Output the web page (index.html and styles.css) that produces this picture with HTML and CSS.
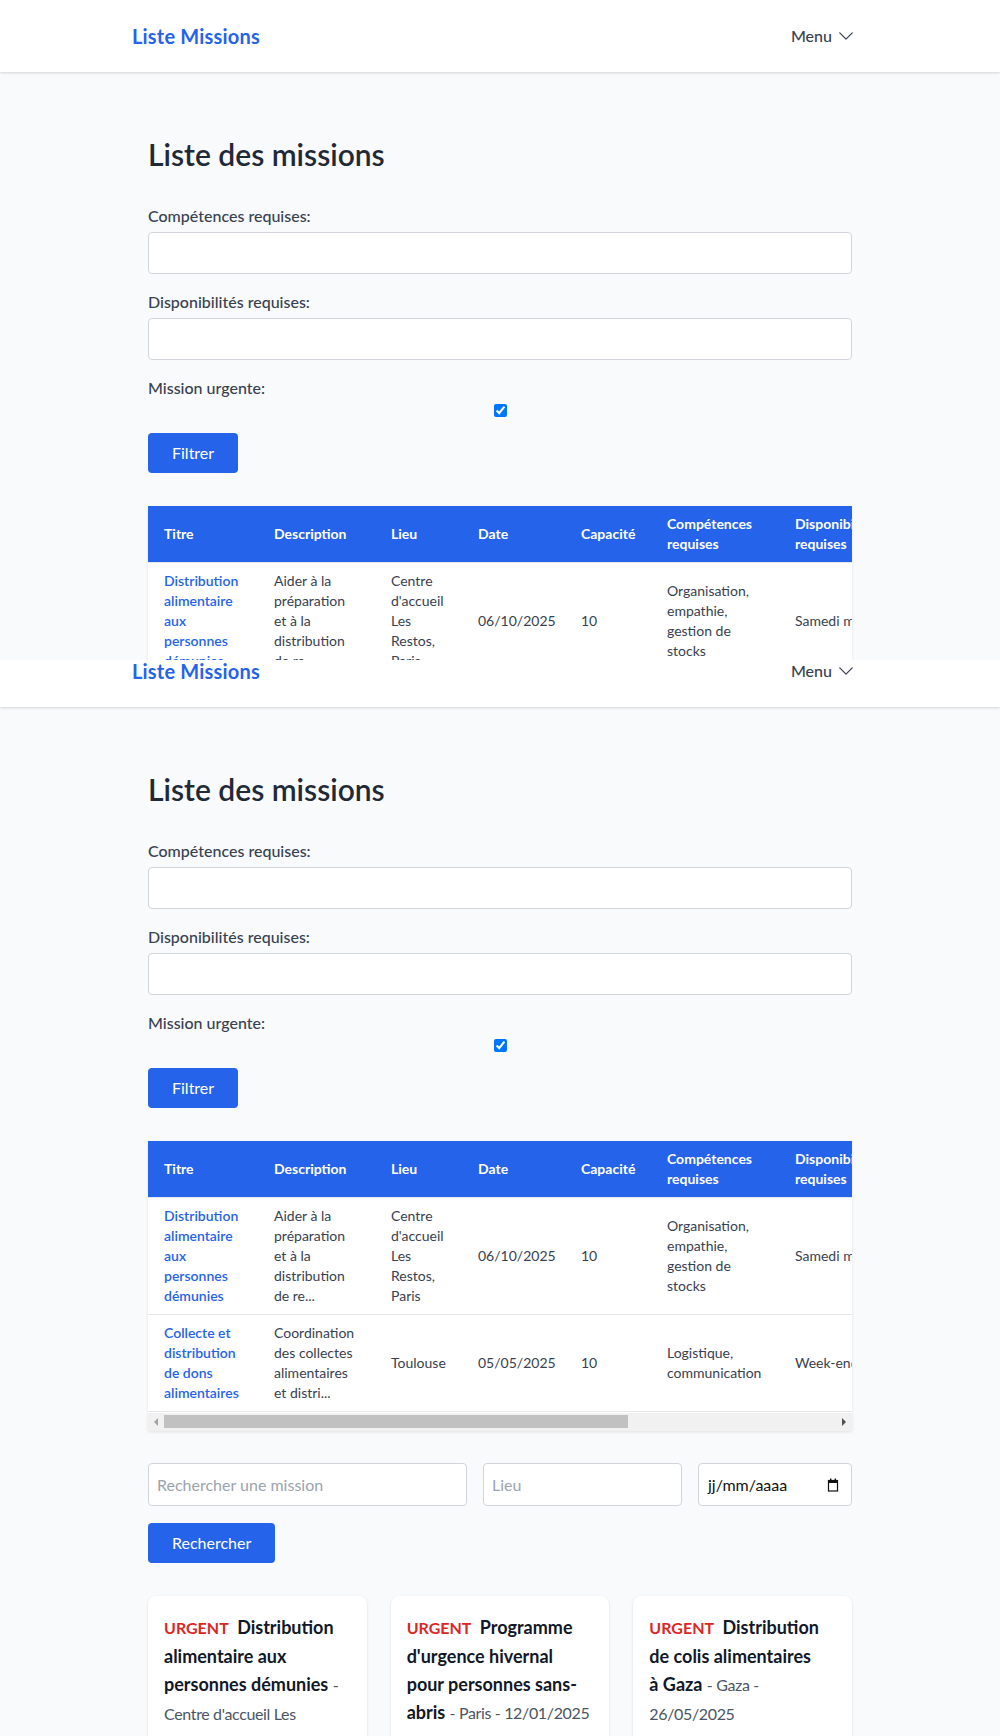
FILE: index.html
```html
<!DOCTYPE html>
<html lang="fr">
<head>
<meta charset="utf-8">
<title>Liste Missions</title>
<link rel="stylesheet" href="styles.css">
</head>
<body>
<div class="shot shot-top">
  <div class="page">
    <header class="topbar">
      <div class="topbar-inner">
        <a class="brand" href="#">Liste Missions</a>
        <button class="menu-btn" type="button">Menu <svg viewBox="0 0 24 24" fill="none" stroke="currentColor" stroke-width="1.5"><path stroke-linecap="round" stroke-linejoin="round" d="M19.5 8.25l-7.5 7.5-7.5-7.5"/></svg></button>
      </div>
    </header>
    <main class="content">
      <h1 class="title">Liste des missions</h1>
      <form class="filter-form">
        <div class="field"><label>Compétences requises:</label><input class="text-input" type="text"></div>
        <div class="field"><label>Disponibilités requises:</label><input class="text-input" type="text"></div>
        <div class="field"><label>Mission urgente:</label><input class="check" type="checkbox" checked></div>
        <button class="btn" type="button">Filtrer</button>
      </form>
      <div class="table-wrap">
        <div class="table-clip">
        <table>
          <colgroup><col class="c-titre"><col class="c-desc"><col class="c-lieu"><col class="c-date"><col class="c-cap"><col class="c-comp"><col class="c-dispo"><col class="c-urg"><col class="c-act"></colgroup>
          <thead><tr><th>Titre</th><th>Description</th><th>Lieu</th><th>Date</th><th>Capacité</th><th>Compétences requises</th><th>Disponibilités requises</th><th>Urgente</th><th>Actions</th></tr></thead>
          <tbody>
            <tr><td><a class="mlink" href="#">Distribution alimentaire aux personnes démunies</a></td><td>Aider à la préparation et à la distribution de re...</td><td>Centre d'accueil Les Restos, Paris</td><td>06/10/2025</td><td>10</td><td>Organisation, empathie, gestion de stocks</td><td>Samedi matin</td><td>Oui</td><td>Voir</td></tr>
            <tr><td><a class="mlink" href="#">Collecte et distribution de dons alimentaires</a></td><td>Coordination des collectes alimentaires et distri...</td><td>Toulouse</td><td>05/05/2025</td><td>10</td><td>Logistique, communication</td><td>Week-end</td><td>Oui</td><td>Voir</td></tr>
          </tbody>
        </table>
        </div>
        <div class="hscroll" aria-hidden="true"><span class="hs-arrow hs-left"></span><span class="hs-track"><span class="hs-thumb"></span></span><span class="hs-arrow hs-right"></span></div>
      </div>
      <form class="search-form">
        <div class="search-row">
          <input class="text-input s-main" type="text" placeholder="Rechercher une mission">
          <input class="text-input s-lieu" type="text" placeholder="Lieu">
          <div class="date-field"><span>jj/mm/aaaa</span><svg width="12" height="14" viewBox="0 0 12 14"><rect x="1.5" y="2.5" width="9" height="10.5" fill="none" stroke="#111" stroke-width="1.2"/><rect x="1" y="2" width="10" height="3" fill="#111"/><rect x="3" y="0.5" width="1.4" height="2" fill="#111"/><rect x="7.6" y="0.5" width="1.4" height="2" fill="#111"/></svg></div>
        </div>
        <button class="btn" type="button">Rechercher</button>
      </form>
      <div class="cards">
        <div class="card"><h3><span class="urgent">URGENT</span> Distribution alimentaire aux personnes démunies <span class="meta">- Centre d'accueil Les Restos,&nbsp;Paris - 06/10/2025</span></h3></div>
        <div class="card"><h3><span class="urgent">URGENT</span> Programme d'urgence hivernal pour personnes sans-abris <span class="meta">- Paris - 12/01/2025</span></h3></div>
        <div class="card"><h3><span class="urgent">URGENT</span> Distribution de colis alimentaires à&nbsp;Gaza <span class="meta">- Gaza - 26/05/2025</span></h3></div>
      </div>
    </main>
  </div>
</div>
<div class="shot shot-rest">
  <div class="page page-shifted">
    <header class="topbar">
      <div class="topbar-inner">
        <a class="brand" href="#">Liste Missions</a>
        <button class="menu-btn" type="button">Menu <svg viewBox="0 0 24 24" fill="none" stroke="currentColor" stroke-width="1.5"><path stroke-linecap="round" stroke-linejoin="round" d="M19.5 8.25l-7.5 7.5-7.5-7.5"/></svg></button>
      </div>
    </header>
    <main class="content">
      <h1 class="title">Liste des missions</h1>
      <form class="filter-form">
        <div class="field"><label>Compétences requises:</label><input class="text-input" type="text"></div>
        <div class="field"><label>Disponibilités requises:</label><input class="text-input" type="text"></div>
        <div class="field"><label>Mission urgente:</label><input class="check" type="checkbox" checked></div>
        <button class="btn" type="button">Filtrer</button>
      </form>
      <div class="table-wrap">
        <div class="table-clip">
        <table>
          <colgroup><col class="c-titre"><col class="c-desc"><col class="c-lieu"><col class="c-date"><col class="c-cap"><col class="c-comp"><col class="c-dispo"><col class="c-urg"><col class="c-act"></colgroup>
          <thead><tr><th>Titre</th><th>Description</th><th>Lieu</th><th>Date</th><th>Capacité</th><th>Compétences requises</th><th>Disponibilités requises</th><th>Urgente</th><th>Actions</th></tr></thead>
          <tbody>
            <tr><td><a class="mlink" href="#">Distribution alimentaire aux personnes démunies</a></td><td>Aider à la préparation et à la distribution de re...</td><td>Centre d'accueil Les Restos, Paris</td><td>06/10/2025</td><td>10</td><td>Organisation, empathie, gestion de stocks</td><td>Samedi matin</td><td>Oui</td><td>Voir</td></tr>
            <tr><td><a class="mlink" href="#">Collecte et distribution de dons alimentaires</a></td><td>Coordination des collectes alimentaires et distri...</td><td>Toulouse</td><td>05/05/2025</td><td>10</td><td>Logistique, communication</td><td>Week-end</td><td>Oui</td><td>Voir</td></tr>
          </tbody>
        </table>
        </div>
        <div class="hscroll" aria-hidden="true"><span class="hs-arrow hs-left"></span><span class="hs-track"><span class="hs-thumb"></span></span><span class="hs-arrow hs-right"></span></div>
      </div>
      <form class="search-form">
        <div class="search-row">
          <input class="text-input s-main" type="text" placeholder="Rechercher une mission">
          <input class="text-input s-lieu" type="text" placeholder="Lieu">
          <div class="date-field"><span>jj/mm/aaaa</span><svg width="12" height="14" viewBox="0 0 12 14"><rect x="1.5" y="2.5" width="9" height="10.5" fill="none" stroke="#111" stroke-width="1.2"/><rect x="1" y="2" width="10" height="3" fill="#111"/><rect x="3" y="0.5" width="1.4" height="2" fill="#111"/><rect x="7.6" y="0.5" width="1.4" height="2" fill="#111"/></svg></div>
        </div>
        <button class="btn" type="button">Rechercher</button>
      </form>
      <div class="cards">
        <div class="card"><h3><span class="urgent">URGENT</span> Distribution alimentaire aux personnes démunies <span class="meta">- Centre d'accueil Les Restos,&nbsp;Paris - 06/10/2025</span></h3></div>
        <div class="card"><h3><span class="urgent">URGENT</span> Programme d'urgence hivernal pour personnes sans-abris <span class="meta">- Paris - 12/01/2025</span></h3></div>
        <div class="card"><h3><span class="urgent">URGENT</span> Distribution de colis alimentaires à&nbsp;Gaza <span class="meta">- Gaza - 26/05/2025</span></h3></div>
      </div>
    </main>
  </div>
</div>
</body>
</html>
```
FILE: styles.css
```css
* { box-sizing: border-box; }
html, body { margin: 0; padding: 0; }
body {
  background: #f9fafb;
  font-family: Lato, "Noto Sans", sans-serif;
  color: #1f2937;
  font-size: 16px;
  line-height: 24px;
}
.shot { overflow: hidden; }
.shot-top { height: 660px; }
.shot-rest { height: 1076px; }
.page-shifted { margin-top: -25px; }

.topbar {
  height: 72px;
  background: #fff;
  box-shadow: 0 1px 3px rgba(0,0,0,0.1), 0 1px 2px rgba(0,0,0,0.06);
  position: relative;
  z-index: 1;
}
.topbar-inner {
  max-width: 768px;
  margin: 0 auto;
  padding: 0 16px;
  height: 100%;
  display: flex;
  align-items: center;
  justify-content: space-between;
}
.brand {
  font-size: 20px;
  line-height: 28px;
  font-weight: 700;
  color: #2563eb;
  text-decoration: none;
  letter-spacing: 0.2px;
}
.menu-btn {
  display: flex;
  align-items: center;
  padding: 0 12px;
  background: none;
  border: 0;
  font-family: inherit;
  font-size: 16px;
  line-height: 24px;
  font-weight: 500;
  color: #374151;
}
.menu-btn svg { width: 20px; height: 20px; margin-left: 4px; }

.content {
  max-width: 768px;
  margin: 0 auto;
  padding: 64px 32px 0;
}
.title {
  font-size: 30px;
  line-height: 36px;
  font-weight: 600;
  color: #1f2937;
  margin: 0 0 32px;
}
.filter-form { margin: 0 0 33px; }
.field { margin-bottom: 16px; }
.field label {
  display: block;
  margin-bottom: 4px;
  font-weight: 500;
  color: #374151;
}
.text-input {
  display: block;
  width: 100%;
  height: 42px;
  border: 1px solid #d1d5db;
  border-radius: 4px;
  background: #fff;
  padding: 8px;
  font-family: inherit;
  font-size: 16px;
  color: #111827;
}
.text-input::placeholder { color: #9ca3af; }
.check { display: block; margin: 0 auto; width: 13px; height: 13px; }
.btn {
  display: block;
  height: 40px;
  padding: 8px 24px;
  border: 0;
  border-radius: 4px;
  background: #2563eb;
  color: #fff;
  font-family: inherit;
  font-size: 16px;
  line-height: 24px;
}

.table-wrap {
  background: #fff;
  box-shadow: 0 1px 3px rgba(0,0,0,0.1);
}
.table-clip { overflow: hidden; }
table {
  width: 1024px;
  table-layout: fixed;
  border-collapse: collapse;
  font-size: 14px;
  line-height: 20px;
  border-bottom: 1px solid #e5e7eb;
}
.c-titre { width: 110px; }
.c-desc { width: 117px; }
.c-lieu { width: 87px; }
.c-date { width: 103px; }
.c-cap { width: 86px; }
.c-comp { width: 128px; }
.c-dispo { width: 150px; }
.c-urg { width: 100px; }
.c-act { width: 143px; }
th {
  background: #2563eb;
  color: #fff;
  font-weight: 700;
  text-align: left;
  padding: 8px 16px;
  vertical-align: middle;
}
td {
  padding: 8px 16px;
  border-top: 1px solid #e5e7eb;
  color: #374151;
  vertical-align: middle;
}
td:nth-child(7) { white-space: nowrap; }
.mlink { color: #2563eb; font-weight: 600; text-decoration: none; }

/* horizontal scrollbar of the table container */
.hscroll {
  display: flex;
  height: 18px;
  margin-top: 1px;
  background: #f1f1f1;
}
.hs-arrow {
  width: 16px;
  flex: none;
  display: flex;
  align-items: center;
  justify-content: center;
}
.hs-arrow::before {
  content: "";
  width: 0;
  height: 0;
  border-top: 4px solid transparent;
  border-bottom: 4px solid transparent;
}
.hs-left::before { border-right: 4px solid #a3a3a3; }
.hs-right::before { border-left: 4px solid #505050; }
.hs-track {
  flex: 1;
  display: flex;
  padding: 2px 0 3px;
}
.hs-thumb {
  width: 464px;
  background: #c1c1c1;
}

.search-form { margin-top: 32px; }
.search-row { display: flex; gap: 16px; margin-bottom: 17px; }
.search-row .text-input { height: 43px; }
.s-main { width: 319px; flex: none; }
.s-lieu { width: 199px; flex: none; }
.date-field {
  width: 154px;
  height: 43px;
  flex: none;
  display: flex;
  align-items: center;
  justify-content: space-between;
  padding: 0 12px 0 9px;
  background: #fff;
  border: 1px solid #d1d5db;
  border-radius: 4px;
  color: #111;
}

.cards {
  margin-top: 33px;
  display: grid;
  grid-template-columns: repeat(3, 1fr);
  gap: 24px;
}
.card {
  background: #fff;
  border-radius: 8px;
  box-shadow: 0 1px 3px rgba(0,0,0,0.1), 0 1px 2px rgba(0,0,0,0.06);
  padding: 17px 16px 16px;
  min-height: 200px;
}
.card h3 {
  margin: 0;
  font-size: 18px;
  line-height: 28px;
  font-weight: 700;
  color: #111827;
}
.urgent { color: #dc2626; font-size: 16px; font-weight: 700; margin-right: 4px; }
.meta { font-size: 16px; font-weight: 400; color: #4b5563; letter-spacing: -0.35px; }
```
